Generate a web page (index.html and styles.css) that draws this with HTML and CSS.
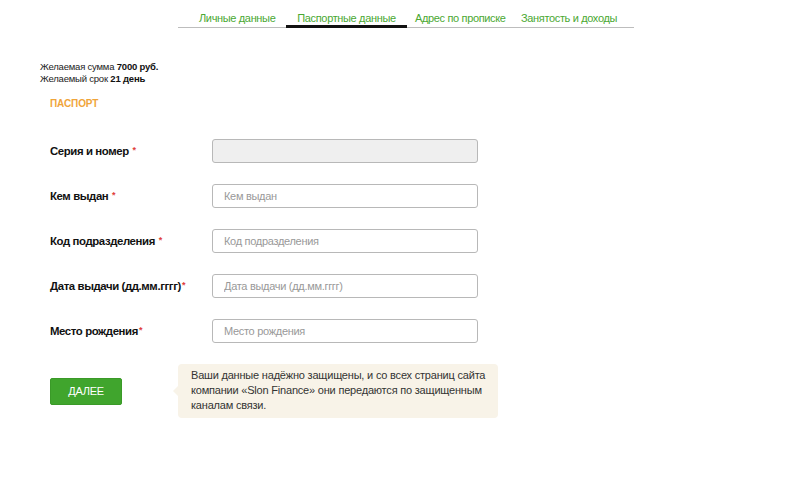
FILE: index.html
```html
<!DOCTYPE html>
<html lang="ru">
<head>
<meta charset="utf-8">
<link rel="stylesheet" href="styles.css">
</head>
<body>
<nav class="tabs">
  <a class="tab t1">Личные данные</a>
  <a class="tab t2 active">Паспортные данные</a>
  <a class="tab t3">Адрес по прописке</a>
  <a class="tab t4">Занятость и доходы</a>
</nav>
<div class="summary">
  <div>Желаемая сумма <b>7000 руб.</b></div>
  <div>Желаемый срок <b>21 день</b></div>
</div>
<form class="form">
  <h2 class="section">ПАСПОРТ</h2>
  <div class="rows">
    <div class="row"><label>Серия и номер <span class="req">*</span></label><input class="field disabled" disabled></div>
    <div class="row"><label>Кем выдан <span class="req">*</span></label><input class="field" placeholder="Кем выдан"></div>
    <div class="row"><label>Код подразделения <span class="req">*</span></label><input class="field" placeholder="Код подразделения"></div>
    <div class="row"><label>Дата выдачи (дд.мм.гггг)<span class="req">*</span></label><input class="field" placeholder="Дата выдачи (дд.мм.гггг)"></div>
    <div class="row"><label>Место рождения<span class="req">*</span></label><input class="field" placeholder="Место рождения"></div>
  </div>
  <div class="actions">
    <button type="button" class="btn">ДАЛЕЕ</button>
    <div class="note">Ваши данные надёжно защищены, и со всех страниц сайта компании «Slon Finance» они передаются по защищенным каналам связи.</div>
  </div>
</form>
</body>
</html>
```
FILE: styles.css
```css
* { box-sizing: border-box; }
body {
  margin: 0;
  font-family: "Liberation Sans", Arial, sans-serif;
  color: #222;
  background: #fff;
}
.tabs {
  margin: 9px 0 0 178px;
  width: 456px;
  height: 19px;
  border-bottom: 1px solid #bdbdbd;
  display: flex;
  font-size: 11px;
  letter-spacing: -0.35px;
  line-height: 19px;
}
.tab {
  color: #4aa832;
  height: 19px;
  white-space: nowrap;
}
.t1 { width: 108px; padding-left: 21px; }
.t2 { width: 121px; text-align: center; border-bottom: 3px solid #111; }
.t3 { width: 106px; padding-left: 8px; }
.t4 { padding-left: 8px; }
.summary {
  margin: 33px 0 0 40px;
  font-size: 9.5px;
  letter-spacing: -0.2px;
  line-height: 12px;
  color: #222;
}
.summary b { font-weight: bold; color: #111; }
.form { margin: 0 0 0 50px; }
.section {
  margin: 13px 0 0;
  font-size: 10px;
  letter-spacing: -0.1px;
  line-height: 12px;
  color: #f0a53a;
  font-weight: bold;
}
.rows {
  margin-top: 29px;
  display: flex;
  flex-direction: column;
  gap: 21px;
}
.row {
  display: flex;
  align-items: center;
  height: 24px;
}
.row label {
  width: 162px;
  font-size: 11.4px;
  letter-spacing: -0.4px;
  font-weight: bold;
  color: #111;
}
.req { color: #e0403a; font-size: 9px; vertical-align: 2px; margin-left: 1px; }
.field {
  width: 266px;
  height: 24px;
  border: 1px solid #b8b8b8;
  border-radius: 3px;
  background: #fff;
  padding: 0 11px;
  font-family: "Liberation Sans", Arial, sans-serif;
  font-size: 11px;
  letter-spacing: -0.3px;
  color: #333;
}
.field::placeholder { color: #999; }
.field.disabled { background: #efefef; }
.actions {
  margin-top: 21px;
  display: flex;
  align-items: center;
  gap: 56px;
}
.btn {
  width: 72px;
  height: 27px;
  background: #40a52d;
  border: 1px solid #3a9a28;
  border-radius: 2px;
  color: #fff;
  font-family: "Liberation Sans", Arial, sans-serif;
  font-size: 11px;
  letter-spacing: -0.3px;
  padding: 0;
}
.note {
  position: relative;
  width: 320px;
  background: #f8f3e8;
  border-radius: 4px;
  padding: 4px 12px 5px 13px;
  font-size: 11px;
  letter-spacing: -0.2px;
  line-height: 15px;
  color: #333;
}
.note::before {
  content: "";
  position: absolute;
  left: -5px;
  top: 22px;
  border-top: 5px solid transparent;
  border-bottom: 5px solid transparent;
  border-right: 5px solid #f8f3e8;
}
```
